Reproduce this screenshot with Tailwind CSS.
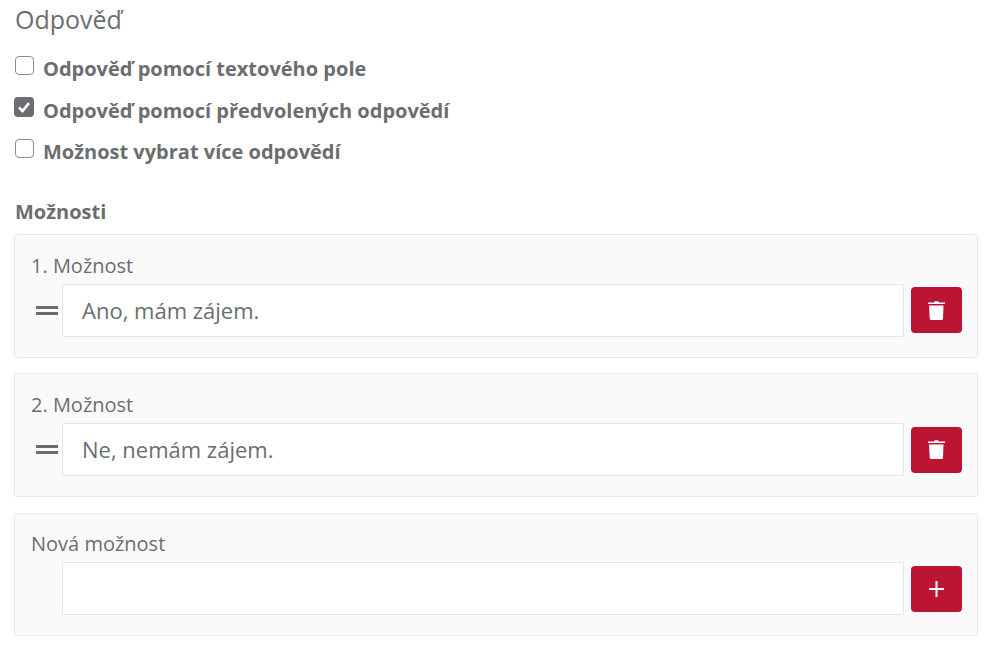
<!DOCTYPE html>
<html lang="cs">
<head>
    <meta charset="UTF-8">
    <script src="https://cdn.jsdelivr.net/npm/@tailwindcss/browser@4"></script>
    <title>Odpověď</title>
</head>
<body class="bg-white font-['Open_Sans',sans-serif] text-[#6c6d70] overflow-hidden">
    <div class="w-[964px] ml-[14px] h-[660px]">
        <h2 class="text-[25px] leading-[30px] pt-[4px] pl-px">Odpověď</h2>

        <div class="flex flex-col gap-[11.5px] mt-[20px] pl-px">
            <label class="flex items-center gap-[9px] h-[30px]">
                <span class="w-[19px] h-[19px] mb-[7px] rounded-[4px] border border-[#8b8c8e] bg-white"></span>
                <span class="text-[20px] font-bold leading-[30px]">Odpověď pomocí textového pole</span>
            </label>
            <label class="flex items-center gap-[9px] h-[30px]">
                <span class="w-[20px] h-[20px] mb-[7px] -ml-px rounded-[4px] bg-[#6c6d70] flex items-center justify-center">
                    <svg class="w-[14px] h-[14px]" viewBox="0 0 14 14" fill="none" stroke="#fff" stroke-width="2.6"><path d="M2 7.5 5.5 11 12 3.2"/></svg>
                </span>
                <span class="text-[20px] font-bold leading-[30px]">Odpověď pomocí předvolených odpovědí</span>
            </label>
            <label class="flex items-center gap-[9px] h-[30px]">
                <span class="w-[19px] h-[19px] mb-[7px] rounded-[4px] border border-[#8b8c8e] bg-white"></span>
                <span class="text-[20px] font-bold leading-[30px]">Možnost vybrat více odpovědí</span>
            </label>
        </div>

        <div class="text-[20px] font-bold leading-[26px] mt-[32px] pl-px">Možnosti</div>

        <div class="mt-[9px] h-[124px] rounded-[3px] border border-[#e9e9e9] bg-[#fafafa] pt-[18px] pl-[16px] pr-[15px]">
            <div class="text-[20px] leading-[26px] h-[31px]">1. Možnost</div>
            <div class="flex items-center">
                <div class="w-[31px] flex flex-col gap-[3px] pl-[5px] pr-[4px]">
                    <span class="h-[3px] bg-[#6c6d70]"></span>
                    <span class="h-[3px] bg-[#6c6d70]"></span>
                </div>
                <div class="w-[842px] h-[53px] bg-white border border-[#e6e6e6] rounded-[2px] pl-[19px] text-[22px] leading-[51px]">Ano, mám zájem.</div>
                <button class="ml-[7px] mb-[1px] w-[51px] h-[46px] rounded-[4px] bg-[#bb1533] flex items-center justify-center">
                    <svg class="w-[17px] h-[19px]" viewBox="0 0 17 19" fill="#fff"><path d="M6 1.500 6.800.2h3.400L11 1.500h6v1.500H0V1.500ZM1 4.500h14.500L15 18.200l-.8.800H2.800l-1-.8Z"/></svg>
                </button>
            </div>
        </div>

        <div class="mt-[15px] h-[124px] rounded-[3px] border border-[#e9e9e9] bg-[#fafafa] pt-[18px] pl-[16px] pr-[15px]">
            <div class="text-[20px] leading-[26px] h-[31px]">2. Možnost</div>
            <div class="flex items-center">
                <div class="w-[31px] flex flex-col gap-[3px] pl-[5px] pr-[4px]">
                    <span class="h-[3px] bg-[#6c6d70]"></span>
                    <span class="h-[3px] bg-[#6c6d70]"></span>
                </div>
                <div class="w-[842px] h-[53px] bg-white border border-[#e6e6e6] rounded-[2px] pl-[19px] text-[22px] leading-[51px]">Ne, nemám zájem.</div>
                <button class="ml-[7px] w-[51px] h-[46px] rounded-[4px] bg-[#bb1533] flex items-center justify-center">
                    <svg class="w-[17px] h-[19px]" viewBox="0 0 17 19" fill="#fff"><path d="M6 1.500 6.800.2h3.400L11 1.500h6v1.500H0V1.500ZM1 4.500h14.500L15 18.200l-.8.800H2.800l-1-.8Z"/></svg>
                </button>
            </div>
        </div>

        <div class="mt-[16px] h-[123px] rounded-[3px] border border-[#e9e9e9] bg-[#fafafa] pt-[17px] pl-[16px] pr-[15px]">
            <div class="text-[20px] leading-[26px] h-[31px]">Nová možnost</div>
            <div class="flex items-center">
                <div class="w-[31px]"></div>
                <div class="w-[842px] h-[53px] bg-white border border-[#e6e6e6] rounded-[2px]"></div>
                <button class="ml-[7px] w-[51px] h-[46px] rounded-[4px] bg-[#bb1533] flex items-center justify-center">
                    <svg class="w-[15px] h-[16px]" viewBox="0 0 15 16" fill="#fff"><path d="M6.500 0h2v7H15v2H8.500v7h-2V9H0V7h6.500Z"/></svg>
                </button>
            </div>
        </div>
    </div>
</body>
</html>
